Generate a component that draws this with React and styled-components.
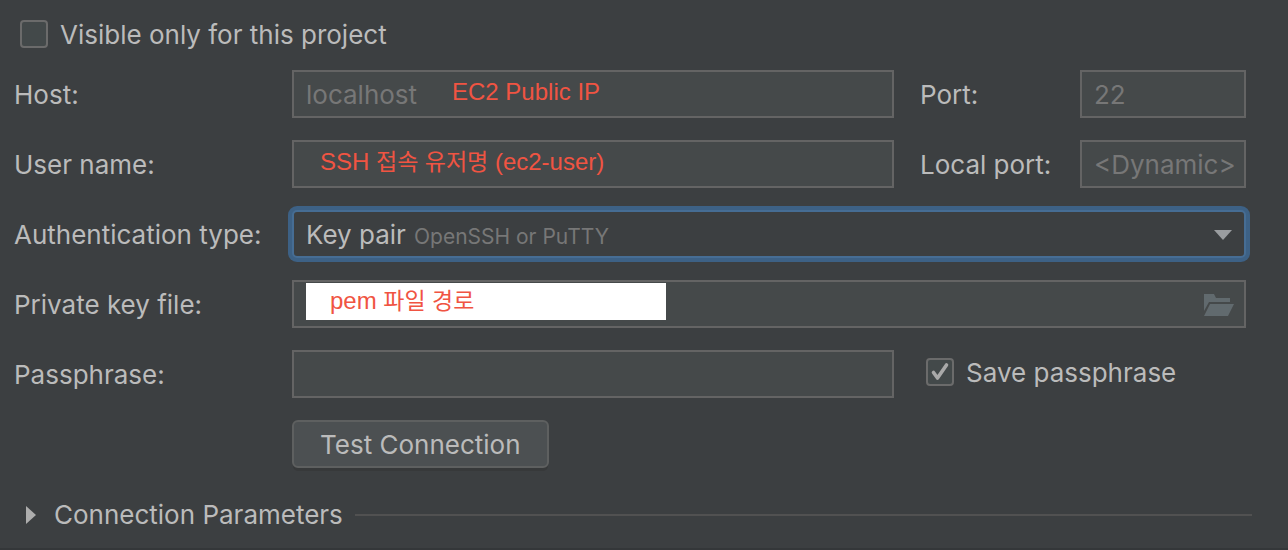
import React, { useState } from "react";
import styled, { createGlobalStyle } from "styled-components";

const GlobalStyle = createGlobalStyle`
  *, *::before, *::after { box-sizing: border-box; }
  body {
    margin: 0;
    background: #3c3f41;
    color: #bbbbbb;
    font: 26px/32px Inter, "Noto Sans CJK KR", sans-serif;
  }
  input, select, button { font: inherit; color: inherit; margin: 0; }
`;

const Page = styled.main`
  display: flex;
  flex-direction: column;
  gap: 20px;
  min-height: 100vh;
  padding: 18px 36px 0 14px;
  border-bottom: 2px solid #343739;
`;

const Form = styled.form`
  display: grid;
  grid-template-columns: 278px minmax(0, 1fr) 186px 166px;
  row-gap: 22px;
  align-items: center;
  padding-right: 6px;
`;

const Label = styled.label`
  white-space: nowrap;
  padding-top: 2px;
  padding-left: ${(p) => (p.$side ? "26px" : "0")};
`;

const Field = styled.div`
  position: relative;
  display: flex;
  grid-column: ${(p) => (p.$wide ? "2 / -1" : "auto")};
`;

const Input = styled.input`
  flex: 1;
  min-width: 0;
  width: 100%;
  height: 48px;
  padding: 0 8px 0 12px;
  background: #45494a;
  border: 2px solid #646464;
  border-radius: 0;
  outline: none;
  &::placeholder { color: #777777; opacity: 1; }
`;

const Select = styled.select`
  flex: 1;
  height: 48px;
  padding: 2px 12px 0;
  appearance: none;
  background: #3c3f41;
  border: 2px solid #466d94;
  border-radius: 5px;
  box-shadow: 0 0 0 4px #3d6185;
  outline: none;
`;

const Hint = styled.span`
  position: absolute;
  top: 11px;
  left: 122px;
  font-size: 21px;
  color: #777777;
  pointer-events: none;
`;

const Arrow = styled.svg`
  position: absolute;
  top: 20px;
  right: 14px;
  pointer-events: none;
`;

const BrowseButton = styled.button`
  position: absolute;
  top: 12px;
  right: 12px;
  display: flex;
  padding: 0;
  border: 0;
  background: none;
`;

const Note = styled.span`
  position: absolute;
  top: 6px;
  left: ${(p) => p.$left};
  font: 24px/32px "Liberation Sans", "Noto Sans CJK KR", sans-serif;
  color: #f05442;
  white-space: nowrap;
  pointer-events: none;
`;

const Hangul = styled.span`
  font-size: 23px;
`;

const Patch = styled(Note)`
  top: 3px;
  width: 360px;
  height: 37px;
  padding: 2px 0 0 24px;
  background: #ffffff;
`;

const CheckLabel = styled.label`
  display: flex;
  align-items: center;
  gap: 12px;
  white-space: nowrap;
  padding-left: ${(p) => (p.$side ? "32px" : "6px")};
  padding-bottom: ${(p) => (p.$side ? "4px" : "0")};
  grid-column: ${(p) => (p.$side ? "3 / -1" : "auto")};
`;

const CheckText = styled.span`
  height: 32px;
  padding-top: 1px;
`;

const BoxWrap = styled.span`
  position: relative;
  display: flex;
`;

const Box = styled.input`
  appearance: none;
  width: 28px;
  height: 28px;
  background: #43494a;
  border: 2px solid #6b6b6b;
  border-radius: 4px;
`;

const Tick = styled.svg`
  position: absolute;
  inset: 0;
  pointer-events: none;
`;

const Button = styled.button`
  grid-column: 2;
  justify-self: start;
  height: 48px;
  padding: 2px 26px 0;
  background: #4c5052;
  border: 2px solid #5e6060;
  border-radius: 6px;
  box-shadow: 0 4px 0 -1px #37393a;
`;

const Section = styled.details`
  margin-top: 11px;
`;

const Summary = styled.summary`
  display: flex;
  align-items: center;
  list-style: none;
  white-space: nowrap;
  &::-webkit-details-marker { display: none; }
  &::after {
    content: "";
    flex: 1;
    height: 2px;
    margin-left: 12px;
    background: #515151;
  }
`;

const Disclosure = styled.svg`
  margin: 0 18px 0 12px;
`;

function CheckField({ side, initial, children }) {
  const [on, setOn] = useState(initial);
  return (
    <CheckLabel $side={side}>
      <BoxWrap>
        <Box type="checkbox" checked={on} onChange={(e) => setOn(e.target.checked)} />
        {on && (
          <Tick width="28" height="28" viewBox="0 0 28 28" fill="none" aria-hidden="true">
            <path d="M7.5 14.5l4 5.5L20.5 7" stroke="#a9a9a9" strokeWidth="3.6" strokeLinecap="round" strokeLinejoin="round" />
          </Tick>
        )}
      </BoxWrap>
      <CheckText>{children}</CheckText>
    </CheckLabel>
  );
}

export default function App() {
  return (
    <>
      <GlobalStyle />
      <Page>
        <CheckField initial={false}>Visible only for this project</CheckField>
        <Form onSubmit={(e) => e.preventDefault()}>
          <Label htmlFor="host">Host:</Label>
          <Field>
            <Input id="host" placeholder="localhost" />
            <Note $left="160px">EC2 Public IP</Note>
          </Field>
          <Label htmlFor="port" $side>Port:</Label>
          <Field><Input id="port" placeholder="22" /></Field>

          <Label htmlFor="user">User name:</Label>
          <Field>
            <Input id="user" />
            <Note $left="28px">SSH <Hangul>접속 유저명</Hangul> (ec2-user)</Note>
          </Field>
          <Label htmlFor="local" $side>Local port:</Label>
          <Field><Input id="local" placeholder="<Dynamic>" /></Field>

          <Label htmlFor="auth">Authentication type:</Label>
          <Field $wide>
            <Select id="auth" defaultValue="key">
              <option value="key">Key pair</option>
            </Select>
            <Hint>OpenSSH or PuTTY</Hint>
            <Arrow width="18" height="10" viewBox="0 0 18 10" aria-hidden="true">
              <path d="M0 0h18L9 10z" fill="#9a9da0" />
            </Arrow>
          </Field>

          <Label htmlFor="keyfile">Private key file:</Label>
          <Field $wide>
            <Input id="keyfile" />
            <Patch $left="14px">pem <Hangul>파일 경로</Hangul></Patch>
            <BrowseButton type="button" aria-label="Browse">
              <svg width="32" height="24" viewBox="0 0 32 24" aria-hidden="true">
                <path d="M2 2h10l2 4h14v4H7L2 19z" fill="#616a6e" />
                <path d="M8 12h24l-6 12H2z" fill="#616a6e" />
              </svg>
            </BrowseButton>
          </Field>

          <Label htmlFor="pass">Passphrase:</Label>
          <Field><Input id="pass" type="password" /></Field>
          <CheckField side initial>Save passphrase</CheckField>

          <Button type="button">Test Connection</Button>
        </Form>
        <Section>
          <Summary>
            <Disclosure width="10" height="18" viewBox="0 0 10 18" aria-hidden="true">
              <path d="M0 0l10 9L0 18z" fill="#adadad" />
            </Disclosure>
            Connection Parameters
          </Summary>
        </Section>
      </Page>
    </>
  );
}
